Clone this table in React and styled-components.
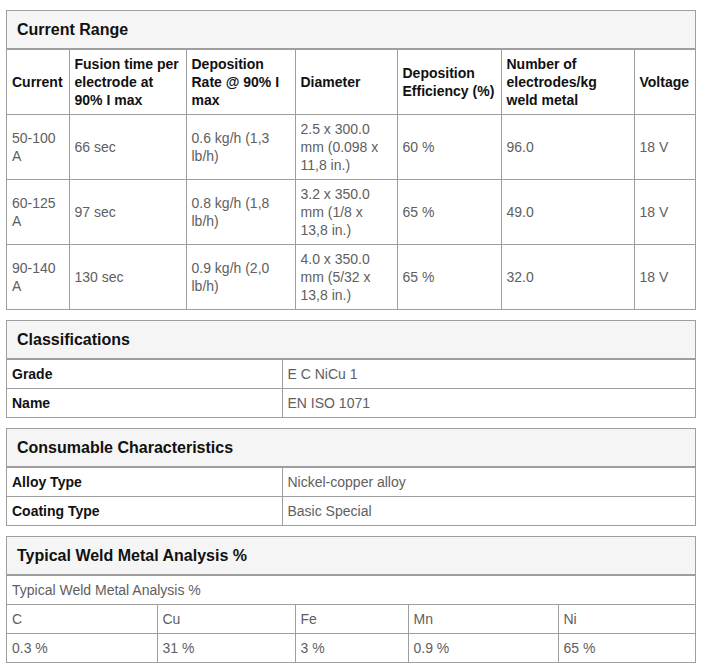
import React from 'react';
import styled, { createGlobalStyle } from 'styled-components';

const GlobalStyle = createGlobalStyle`
  body {
    margin: 0;
    background: #ffffff;
    font-family: "Liberation Sans", Arial, sans-serif;
  }
`;

const Page = styled.div`
  display: flex;
  flex-direction: column;
  gap: 10px;
  width: 690px;
  padding: 10px 9px 0 6px;
`;

const Panel = styled.section`
  border: 1px solid #9e9e9e;
  background: #fff;
`;

const Heading = styled.h3`
  margin: 0;
  padding: 10px 10px;
  font-size: 16px;
  line-height: 17px;
  font-weight: bold;
  color: #111;
  background: #f5f5f5;
  border-bottom: 2px solid #9e9e9e;
`;

const Table = styled.table`
  width: 100%;
  border-collapse: collapse;
  border-style: hidden;
  table-layout: fixed;
  font-size: 14px;
  line-height: 18px;
`;

const Cell = styled.td`
  border: 1px solid #9e9e9e;
  padding: 5px;
  vertical-align: middle;
  text-align: left;
  color: ${p => (p.$strong ? '#111' : '#606060')};
  font-weight: ${p => (p.$strong ? 'bold' : 'normal')};
`;

const HeadCell = styled(Cell).attrs({ as: 'th' })``;

const rangeCols = [62, 117, 109, 102, 104, 133, 61];
const rangeHead = [
  'Current',
  'Fusion time per electrode at 90% I max',
  'Deposition Rate @ 90% I max',
  'Diameter',
  'Deposition Efficiency (%)',
  'Number of electrodes/kg weld metal',
  'Voltage',
];
const rangeRows = [
  ['50-100 A', '66 sec', '0.6 kg/h (1,3 lb/h)', '2.5 x 300.0 mm (0.098 x 11,8 in.)', '60 %', '96.0', '18 V'],
  ['60-125 A', '97 sec', '0.8 kg/h (1,8 lb/h)', '3.2 x 350.0 mm (1/8 x 13,8 in.)', '65 %', '49.0', '18 V'],
  ['90-140 A', '130 sec', '0.9 kg/h (2,0 lb/h)', '4.0 x 350.0 mm (5/32 x 13,8 in.)', '65 %', '32.0', '18 V'],
];

const analysisCols = [150, 138, 113, 150, 137];
const analysis = [
  ['C', '0.3 %'],
  ['Cu', '31 %'],
  ['Fe', '3 %'],
  ['Mn', '0.9 %'],
  ['Ni', '65 %'],
];

const Cols = ({ widths }) => (
  <colgroup>
    {widths.map((w, i) => <col key={i} style={{ width: w }} />)}
  </colgroup>
);

const KeyValuePanel = ({ title, rows }) => (
  <Panel>
    <Heading>{title}</Heading>
    <Table>
      <Cols widths={[275, 413]} />
      <tbody>
        {rows.map(([k, v]) => (
          <tr key={k}>
            <Cell $strong>{k}</Cell>
            <Cell>{v}</Cell>
          </tr>
        ))}
      </tbody>
    </Table>
  </Panel>
);

const App = () => (
  <>
    <GlobalStyle />
    <Page>
      <Panel>
        <Heading>Current Range</Heading>
        <Table>
          <Cols widths={rangeCols} />
          <thead>
            <tr>
              {rangeHead.map(h => <HeadCell key={h} $strong>{h}</HeadCell>)}
            </tr>
          </thead>
          <tbody>
            {rangeRows.map(row => (
              <tr key={row[0]}>
                {row.map((c, i) => <Cell key={i}>{c}</Cell>)}
              </tr>
            ))}
          </tbody>
        </Table>
      </Panel>

      <KeyValuePanel
        title="Classifications"
        rows={[['Grade', 'E C NiCu 1'], ['Name', 'EN ISO 1071']]}
      />

      <KeyValuePanel
        title="Consumable Characteristics"
        rows={[['Alloy Type', 'Nickel-copper alloy'], ['Coating Type', 'Basic Special']]}
      />

      <Panel>
        <Heading>Typical Weld Metal Analysis %</Heading>
        <Table>
          <Cols widths={analysisCols} />
          <tbody>
            <tr>
              <Cell colSpan={5}>Typical Weld Metal Analysis %</Cell>
            </tr>
            <tr>
              {analysis.map(([el]) => <Cell key={el}>{el}</Cell>)}
            </tr>
            <tr>
              {analysis.map(([el, v]) => <Cell key={el}>{v}</Cell>)}
            </tr>
          </tbody>
        </Table>
      </Panel>
    </Page>
  </>
);

export default App;
